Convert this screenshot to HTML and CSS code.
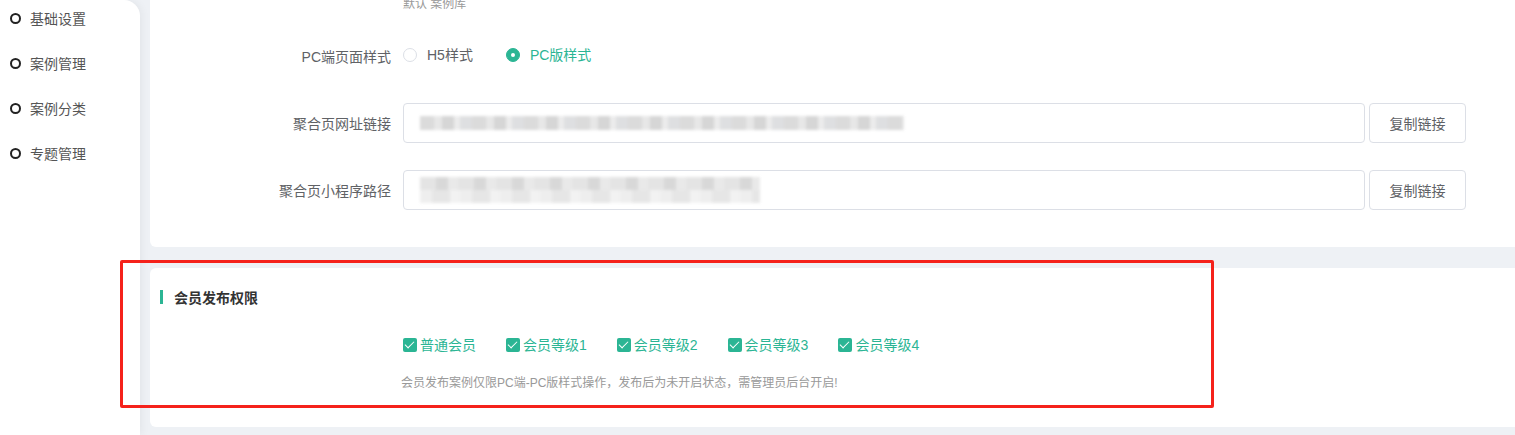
FILE: index.html
```html
<!DOCTYPE html>
<html lang="zh-CN">
<head>
    <meta charset="UTF-8">
    <title>案例库设置</title>
    <link rel="stylesheet" href="styles.css">
</head>
<body>
    <div class="layout">
        <!-- 左侧菜单 -->
        <aside class="sidebar">
            <a class="side-item"><i class="dot"></i>基础设置</a>
            <a class="side-item"><i class="dot"></i>案例管理</a>
            <a class="side-item"><i class="dot"></i>案例分类</a>
            <a class="side-item"><i class="dot"></i>专题管理</a>
        </aside>

        <main class="main">
            <!-- 基础设置 -->
            <section class="card card-basic">
                <div class="form-row hint-row">
                    <div class="form-label"></div>
                    <div class="hint">默认 案例库</div>
                </div>
                <div class="form-row">
                    <div class="form-label">PC端页面样式</div>
                    <div class="radio-group">
                        <label class="radio"><span class="radio-inner"></span>H5样式</label>
                        <label class="radio checked"><span class="radio-inner"></span>PC版样式</label>
                    </div>
                </div>
                <div class="form-row">
                    <div class="form-label">聚合页网址链接</div>
                    <div class="input">
                        <span class="mosaic mosaic-a"></span>
                    </div>
                    <button class="btn">复制链接</button>
                </div>
                <div class="form-row">
                    <div class="form-label">聚合页小程序路径</div>
                    <div class="input">
                        <span class="mosaic mosaic-b"></span>
                    </div>
                    <button class="btn">复制链接</button>
                </div>
            </section>

            <!-- 会员发布权限 -->
            <section class="card card-member">
                <h3 class="card-title">会员发布权限</h3>
                <div class="form-row check-row">
                    <div class="form-label"></div>
                    <div class="check-group">
                        <label class="check"><span class="check-box"></span>普通会员</label>
                        <label class="check"><span class="check-box"></span>会员等级1</label>
                        <label class="check"><span class="check-box"></span>会员等级2</label>
                        <label class="check"><span class="check-box"></span>会员等级3</label>
                        <label class="check"><span class="check-box"></span>会员等级4</label>
                    </div>
                </div>
                <div class="form-row note-row">
                    <div class="form-label"></div>
                    <div class="note">会员发布案例仅限PC端-PC版样式操作，发布后为未开启状态，需管理员后台开启!</div>
                </div>
            </section>
        </main>
    </div>

    <!-- 截图标注框 -->
    <div class="mark"></div>
</body>
</html>
```

FILE: styles.css
```css
:root {
    --green: #2bb594;
    --border: #dcdfe6;
    --bg: #eef1f5;
    --text: #606266;
}

* {
    margin: 0;
    padding: 0;
    box-sizing: border-box;
    font-family: 'Liberation Sans', 'Noto Sans CJK SC', sans-serif;
}

body {
    background: var(--bg);
    color: var(--text);
    font-size: 14px;
    height: 435px;
    overflow: hidden;
    position: relative;
}

.layout {
    display: flex;
    height: 100%;
}

/* 左侧菜单 */
.sidebar {
    width: 140px;
    flex-shrink: 0;
    background: #fff;
    border-top-right-radius: 16px;
    box-shadow: 2px 0 8px rgba(0, 0, 0, 0.05);
    padding-top: 8px;
}

.side-item {
    display: flex;
    align-items: center;
    height: 20px;
    margin-bottom: 25px;
    padding-left: 10px;
    color: #555;
    font-size: 14px;
}

.dot {
    width: 11px;
    height: 11px;
    border: 2px solid #222;
    border-radius: 50%;
    margin-right: 9px;
}

/* 主区域 */
.main {
    flex: 1;
    padding-left: 10px;
    display: flex;
    flex-direction: column;
    align-items: stretch;
    gap: 21px;
}

.card {
    background: #fff;
    border-radius: 0 0 0 6px;
}

.card-basic {
    padding-bottom: 37px;
}

.card-member {
    height: 159px;
    border-radius: 6px 0 0 6px;
    padding: 19px 0 0 10px;
}

.form-row {
    display: flex;
    align-items: center;
    height: 40px;
    margin-bottom: 27px;
}

.card-basic .form-row:last-child {
    margin-bottom: 0;
}

.form-label {
    width: 253px;
    padding-right: 12px;
    text-align: right;
    flex-shrink: 0;
    color: var(--text);
}

.hint-row {
    height: 20px;
    margin-top: -8px;
    margin-bottom: 24px;
}

.hint {
    font-size: 12px;
    color: #999;
}

/* 单选 */
.radio-group {
    display: flex;
    gap: 33px;
}

.radio {
    display: flex;
    align-items: center;
    color: var(--text);
    line-height: 20px;
    margin-top: -2px;
}

.radio-inner {
    width: 14px;
    height: 14px;
    border: 1px solid var(--border);
    border-radius: 50%;
    margin-right: 10px;
    display: flex;
    align-items: center;
    justify-content: center;
}

.radio.checked {
    color: var(--green);
}

.radio.checked .radio-inner {
    background: var(--green);
    border-color: var(--green);
}

.radio.checked .radio-inner::after {
    content: '';
    width: 4px;
    height: 4px;
    border-radius: 50%;
    background: #fff;
}

/* 输入框 */
.input {
    width: 962px;
    height: 40px;
    border: 1px solid var(--border);
    border-radius: 4px;
    padding: 0 16px;
    display: flex;
    align-items: center;
}

.mosaic {
    display: block;
    filter: blur(1.5px);
    opacity: 0.85;
}

.mosaic-a {
    width: 484px;
    height: 14px;
    background: repeating-linear-gradient(90deg, #d5d5d5 0 14px, #e3e3e3 14px 22px, #cfcfcf 22px 34px, #e9e9e9 34px 40px, #d9dadc 40px 52px);
}

.mosaic-b {
    width: 340px;
    height: 26px;
    background:
        repeating-linear-gradient(90deg, #e0e0e0 0 16px, #d2d2d2 16px 28px, #e6e6e6 28px 38px) top / 100% 13px no-repeat,
        repeating-linear-gradient(90deg, #ececec 0 12px, #e2e2e2 12px 30px, #f0f0f0 30px 40px) bottom / 100% 13px no-repeat;
}

.btn {
    width: 97px;
    height: 40px;
    margin-left: 4px;
    background: #fff;
    border: 1px solid var(--border);
    border-radius: 4px;
    color: var(--text);
    font-size: 14px;
}

/* 会员权限 */
.card-title {
    display: flex;
    align-items: center;
    height: 20px;
    font-size: 14px;
    font-weight: 700;
    color: #333;
    margin-bottom: 28px;
}

.card-title::before {
    content: '';
    width: 3px;
    height: 14px;
    background: var(--green);
    margin-right: 11px;
}

.card-member .form-label {
    width: 243px;
}

.check-row {
    height: 20px;
    margin-bottom: 16px;
}

.note-row {
    height: 20px;
    margin-bottom: 0;
}

.check-group {
    display: flex;
    gap: 30px;
}

.check {
    display: flex;
    align-items: center;
    color: var(--green);
    line-height: 20px;
}

.check-box {
    position: relative;
    width: 14px;
    height: 14px;
    border-radius: 2px;
    background: var(--green);
    margin-right: 3px;
}

.check-box::after {
    content: '';
    position: absolute;
    left: 4px;
    top: 1px;
    width: 4px;
    height: 8px;
    border: solid #fff;
    border-width: 0 1.5px 1.5px 0;
    transform: rotate(45deg);
}

.note {
    font-size: 12px;
    color: #999;
    margin-left: -2px;
}

/* 标注框 */
.mark {
    position: absolute;
    left: 120px;
    top: 260px;
    width: 1094px;
    height: 148px;
    border: 3px solid #f5221b;
    border-radius: 2px;
}
```
